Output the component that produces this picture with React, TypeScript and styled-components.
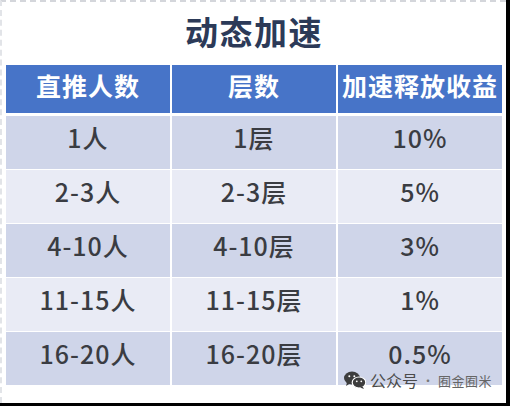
import styled, { createGlobalStyle } from 'styled-components'

const GlobalStyle = createGlobalStyle`
    html, body {
        margin: 0;
        padding: 0;
        background: #000;
    }
    body {
        font-family: "Noto Sans CJK SC", "Noto Sans", sans-serif;
    }
`

const Frame = styled.div`
    position: relative;
    box-sizing: border-box;
    width: 506px;
    height: 403px;
    background: #fff;
    border-top: 2px dashed #d4d6db;
    border-left: 2px dashed #e2e4e8;
    padding: 0 4px 0 4px;
`

const Title = styled.h1`
    margin: 0;
    height: 63px;
    display: flex;
    align-items: center;
    justify-content: center;
    padding-bottom: 6px;
    box-sizing: border-box;
    font-size: 33px;
    font-weight: 700;
    color: #2c3a58;
    letter-spacing: 1.5px;
`

const Table = styled.div`
    display: grid;
    grid-template-columns: repeat(3, 164px);
    grid-template-rows: 50px repeat(5, 53px);
    column-gap: 2px;
    row-gap: 1px;
    width: 496px;
    background: #fff;
`

const HeadCell = styled.div`
    display: flex;
    align-items: center;
    justify-content: center;
    padding-bottom: 8px;
    margin-bottom: 2px;
    box-sizing: border-box;
    background: #4774c8;
    color: #fff;
    font-size: 25px;
    font-weight: 700;
    letter-spacing: 1px;
    white-space: nowrap;
`

const Cell = styled.div<{ $odd: boolean }>`
    display: flex;
    align-items: center;
    justify-content: center;
    padding-bottom: 11px;
    box-sizing: border-box;
    background: ${(p) => (p.$odd ? '#cfd5e9' : '#e9ebf5')};
    color: #3a3c42;
    font-size: 25px;
    font-weight: 500;
    letter-spacing: 1px;
`

const Watermark = styled.div`
    position: absolute;
    right: 14px;
    bottom: 11px;
    display: flex;
    align-items: center;
    gap: 4px;
    color: #4a4a4a;
`

const Label = styled.span`
    font-size: 16px;
`

const Dot = styled.span`
    font-size: 12px;
    color: #777;
`

const Name = styled.span`
    font-size: 13px;
    color: #666;
    letter-spacing: 0.5px;
`

const rows = [
    ['1人', '1层', '10%'],
    ['2-3人', '2-3层', '5%'],
    ['4-10人', '4-10层', '3%'],
    ['11-15人', '11-15层', '1%'],
    ['16-20人', '16-20层', '0.5%'],
]

const WechatIcon = () => (
    <svg width="22" height="18" viewBox="0 0 22 18">
        <ellipse cx="8" cy="7" rx="8" ry="6.5" fill="#3d3d3d" />
        <path d="M3 11.5 L2 15 L6 12.5 Z" fill="#3d3d3d" />
        <ellipse cx="15" cy="11.5" rx="6.8" ry="5.5" fill="#3d3d3d" stroke="#fff" strokeWidth="1.2" />
        <path d="M18.5 15.5 L20 18 L16 16.5 Z" fill="#3d3d3d" />
        <circle cx="5.3" cy="5.2" r="1" fill="#fff" />
        <circle cx="10.3" cy="5.2" r="1" fill="#fff" />
        <circle cx="12.8" cy="10.3" r="0.9" fill="#fff" />
        <circle cx="17.3" cy="10.3" r="0.9" fill="#fff" />
    </svg>
)

export default function App() {
    return (
        <>
            <GlobalStyle />
            <Frame>
                <Title>动态加速</Title>
                <Table>
                    <HeadCell>直推人数</HeadCell>
                    <HeadCell>层数</HeadCell>
                    <HeadCell>加速释放收益</HeadCell>
                    {rows.map((row, i) =>
                        row.map((text, j) => (
                            <Cell key={`${i}-${j}`} $odd={i % 2 === 0}>
                                {text}
                            </Cell>
                        ))
                    )}
                </Table>
                <Watermark>
                    <WechatIcon />
                    <Label>公众号</Label>
                    <Dot>·</Dot>
                    <Name>囿金囿米</Name>
                </Watermark>
            </Frame>
        </>
    )
}
